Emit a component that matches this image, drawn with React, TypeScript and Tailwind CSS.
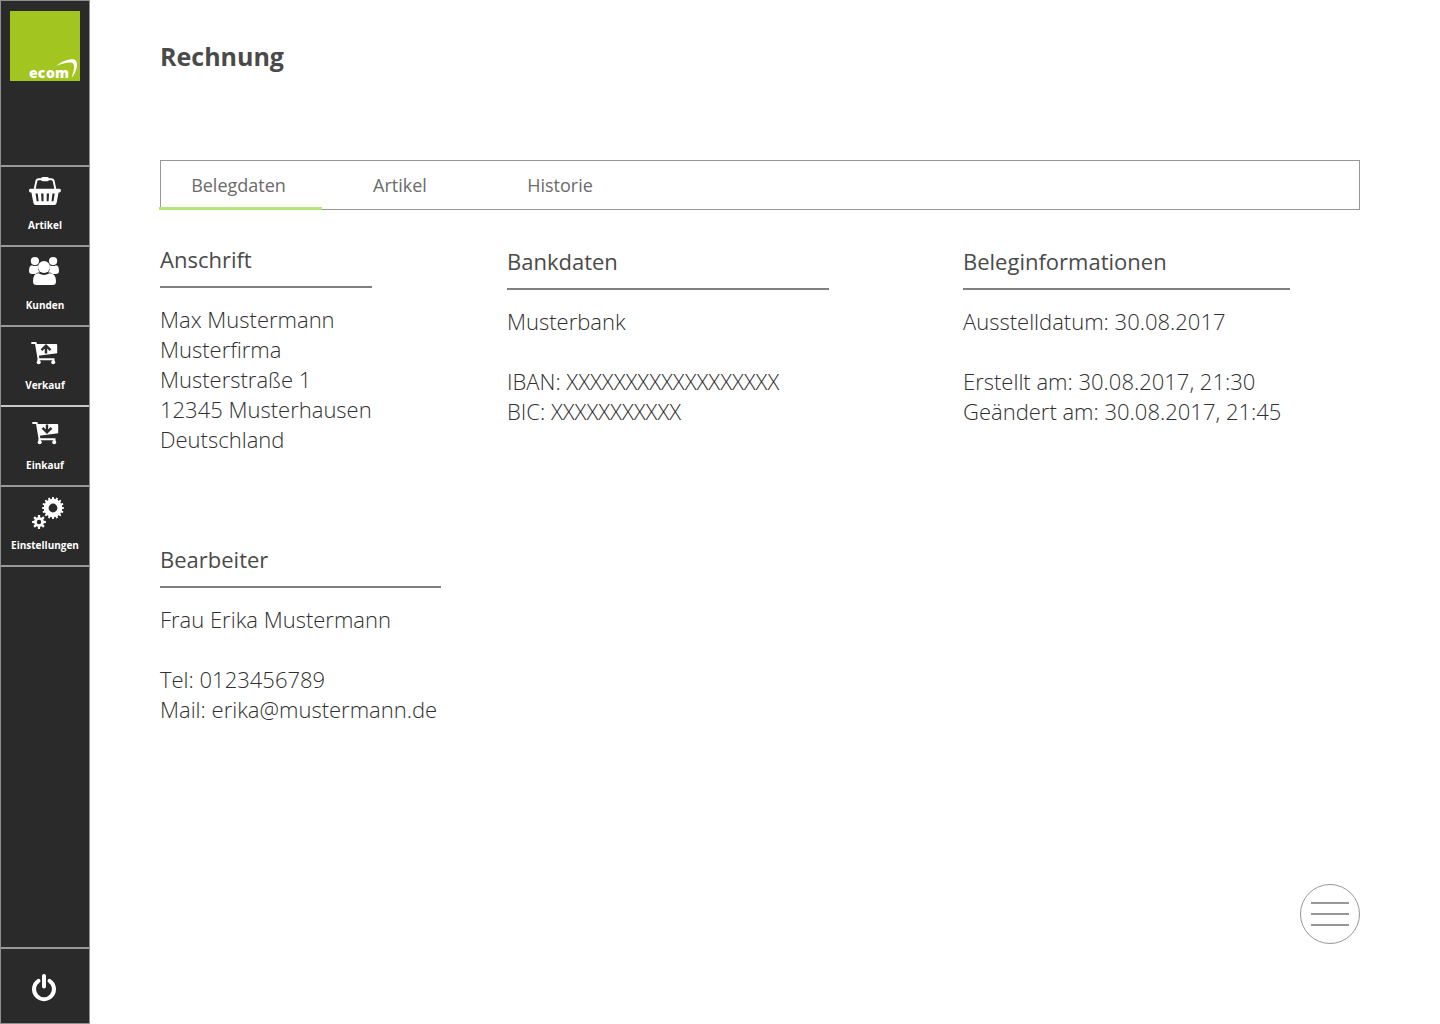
import React from "react";

function gearPath(cx: number, cy: number, outer: number, inner: number, teeth: number) {
  const step = (Math.PI * 2) / teeth;
  const point = (radius: number, angle: number) =>
    `${(cx + radius * Math.sin(angle)).toFixed(2)} ${(cy - radius * Math.cos(angle)).toFixed(2)}`;
  const points: string[] = [];
  for (let i = 0; i < teeth; i++) {
    const a = i * step;
    points.push(
      point(inner, a - step * 0.3),
      point(outer, a - step * 0.2),
      point(outer, a + step * 0.2),
      point(inner, a + step * 0.3),
    );
  }
  return `M${points.join("L")}Z`;
}

function hole(cx: number, cy: number, r: number) {
  return `M${cx - r} ${cy}a${r} ${r} 0 1 0 ${r * 2} 0a${r} ${r} 0 1 0 ${-r * 2} 0Z`;
}

function Logo() {
  return (
    <svg className="block size-[70px]" viewBox="0 0 70 70" role="img" aria-label="ecom">
      <rect width="70" height="70" fill="#a3c520" />
      <g fill="#fff" className="font-['Open_Sans',sans-serif] text-[14px] font-extrabold">
        <text x="19" y="67">ec</text>
        <text x="36" y="67">om</text>
      </g>
      <path d="M46 55C53 49.500 60 47.500 64.500 48.500C68.500 50 68 59 61.500 67C64 60 65.500 53.500 62 51.800C58.500 50.800 53 52.200 46 55Z" fill="#fff" />
    </svg>
  );
}

function BasketIcon() {
  return (
    <svg className="h-9 w-10" viewBox="0 0 40 36" aria-hidden="true">
      <path d="M9.700 16 11.300 8.200Q11.700 6.200 13.700 6.200H26.300Q28.300 6.200 28.700 8.200L30.300 16" fill="none" stroke="#fff" strokeWidth="1.900" />
      <rect x="16" y="4" width="8" height="4.200" rx="1.800" fill="#fff" />
      <path
        fill="#fff"
        fillRule="evenodd"
        d="M5.500 15.800H34.500Q36 15.800 36 17.500T34.500 19.500H33.600L31.600 30Q31.200 32 29.200 32H10.800Q8.800 32 8.400 30L6.400 19.500H5.500Q4 19.500 4 17.500T5.500 15.800ZM10.500 20.500 11.700 28.200H13.700L12.700 20.500ZM16.100 20.500 16.500 28.200H18.500V20.500ZM21.700 20.500V28.200H23.600L24.100 20.500ZM27.500 20.500 26.500 28.200H28.500L29.700 20.500Z"
      />
    </svg>
  );
}

function PeopleIcon() {
  return (
    <svg className="h-9 w-10" viewBox="0 0 40 36" fill="#fff" aria-hidden="true">
      <circle cx="9.900" cy="8.100" r="4.100" />
      <circle cx="28.100" cy="8.100" r="4.100" />
      <path d="M7 12.200Q9.900 14 13 12.200Q12.200 16.800 15 19.200Q12 19.300 10.300 21H7Q4 21 4 18Q4 12.500 7 12.200Z" />
      <path d="M31 12.200Q28.100 14 25 12.200Q25.800 16.800 23 19.200Q26 19.300 27.700 21H31Q34 21 34 18Q34 12.500 31 12.200Z" />
      <circle cx="19" cy="14" r="6" />
      <path d="M13.500 20.200Q19 23.800 24.500 20.200Q31 20.200 31 28.500Q31 32 27.500 32H11.500Q8 32 8 28.500Q8 20.200 13.500 20.200Z" />
    </svg>
  );
}

function CartIcon({ direction }: { direction: "up" | "down" }) {
  return (
    <svg className="h-9 w-10" viewBox="0 0 40 36" aria-hidden="true">
      <g transform={direction === "down" ? "translate(1 0)" : undefined}>
        <path d="M7 10H10.800L13.700 27" fill="none" stroke="#fff" strokeWidth="1.800" strokeLinecap="round" strokeLinejoin="round" />
        <path d="M11.200 11H31.200Q32.200 11 32.200 12V20.300L13.400 22.700Z" fill="#fff" />
        <path d="M13.500 26.300H29.500M13.500 26V29M28.500 26V29" fill="none" stroke="#fff" strokeWidth="1.900" />
        <circle cx="13.700" cy="29.200" r="2" fill="#fff" />
        <circle cx="28.200" cy="29.200" r="2" fill="#fff" />
        <path
          d={direction === "up" ? "M21 20.500V13M16.500 17.200 21 12.700 25.500 17.200" : "M21 11.500V19M16.500 14.800 21 19.300 25.500 14.800"}
          fill="none"
          stroke="#2a2a2a"
          strokeWidth="2.400"
        />
      </g>
    </svg>
  );
}

function GearsIcon() {
  return (
    <svg className="h-9 w-10" viewBox="0 0 40 36" fill="#fff" fillRule="evenodd" aria-hidden="true">
      <path d={gearPath(28, 15, 11, 9.2, 16) + hole(28, 15, 4.4)} />
      <path d={gearPath(14, 29, 7, 5, 8) + hole(14, 29, 2.2)} />
    </svg>
  );
}

function PowerIcon() {
  return (
    <svg className="size-8" viewBox="0 0 32 32" fill="none" stroke="#fff" strokeWidth="4" strokeLinecap="round" aria-hidden="true">
      <path d="M16 5V15.500" />
      <path d="M10.500 9.800A10 10 0 1 0 21.500 9.800" />
    </svg>
  );
}

const navigation = [
  { label: "Artikel", icon: <BasketIcon /> },
  { label: "Kunden", icon: <PeopleIcon /> },
  { label: "Verkauf", icon: <CartIcon direction="up" /> },
  { label: "Einkauf", icon: <CartIcon direction="down" /> },
  { label: "Einstellungen", icon: <GearsIcon /> },
];

const tabs = ["Belegdaten", "Artikel", "Historie"];

function Sidebar() {
  return (
    <aside className="flex w-[90px] shrink-0 flex-col border border-[#8e8f8f] bg-[#2a2a2a] text-white">
      <a href="#start" className="mx-[9px] mt-2.5 mb-[84px]">
        <Logo />
      </a>
      <nav className="flex flex-col border-b-2 border-[#989898]">
        {navigation.map((item) => (
          <a
            key={item.label}
            href={`#${item.label.toLowerCase()}`}
            className="flex h-20 flex-col items-center border-t-2 border-[#989898] pt-1.5 nth-4:border-[#c8c8c8]"
          >
            {item.icon}
            <span className="mt-2.5 text-[10px] leading-3 font-bold">{item.label}</span>
          </a>
        ))}
      </nav>
      <button type="button" aria-label="Abmelden" className="mt-auto flex h-[76px] items-center justify-center border-t-2 border-[#989898] pt-0.5 pr-0.5">
        <PowerIcon />
      </button>
    </aside>
  );
}

function Section({ title, className, children }: { title: string; className: string; children: React.ReactNode }) {
  return (
    <section className={className}>
      <h2 className="border-b-2 border-[#808080] pb-3 text-[22px] leading-[30px]">{title}</h2>
      <div className="mt-4 text-[22px] leading-[30px] font-light whitespace-nowrap text-[#303030]">{children}</div>
    </section>
  );
}

export default function App() {
  return (
    <div className="flex min-h-screen bg-white font-['Open_Sans',sans-serif] text-[#4a4a4a]">
      <Sidebar />
      <main className="min-w-0 flex-1 pt-[38px] pr-20 pb-20 pl-[70px]">
        <h1 className="text-[25px] leading-9 font-bold">Rechnung</h1>

        <div role="tablist" className="mt-[86px] flex h-[50px] border border-[#979797]">
          {tabs.map((tab, index) => (
            <button
              key={tab}
              type="button"
              role="tab"
              aria-selected={index === 0}
              className="-mb-px w-40 border-b-3 border-transparent pt-0.5 pr-1 text-lg text-[#6b6b6b] first:-ml-0.5 first:w-[163px] aria-selected:border-[#b4e67e]"
            >
              {tab}
            </button>
          ))}
        </div>

        <div className="mt-[34px] grid grid-cols-[347fr_456fr_397fr] gap-y-[90px]">
          <Section title="Anschrift" className="w-[212px]">
            <address className="not-italic">
              Max Mustermann
              <br />
              Musterfirma
              <br />
              Musterstraße 1
              <br />
              12345 Musterhausen
              <br />
              Deutschland
            </address>
          </Section>
          <Section title="Bankdaten" className="mt-0.5 w-[322px]">
            <p>Musterbank</p>
            <p className="mt-[30px]">IBAN: XXXXXXXXXXXXXXXXXX</p>
            <p>BIC: XXXXXXXXXXX</p>
          </Section>
          <Section title="Beleginformationen" className="mt-0.5 w-[327px]">
            <p>Ausstelldatum: 30.08.2017</p>
            <p className="mt-[30px]">Erstellt am: 30.08.2017, 21:30</p>
            <p>Geändert am: 30.08.2017, 21:45</p>
          </Section>
          <Section title="Bearbeiter" className="w-[281px]">
            <p>Frau Erika Mustermann</p>
            <p className="mt-[30px]">Tel: 0123456789</p>
            <p>Mail: erika@mustermann.de</p>
          </Section>
        </div>
      </main>

      <button
        type="button"
        aria-label="Menü"
        className="fixed right-20 bottom-20 flex size-[60px] flex-col items-center justify-center gap-[9px] rounded-full border border-[#979797] bg-white"
      >
        <span className="h-0.5 w-[38px] bg-[#979797]" />
        <span className="h-0.5 w-[38px] bg-[#979797]" />
        <span className="h-0.5 w-[38px] bg-[#979797]" />
      </button>
    </div>
  );
}
